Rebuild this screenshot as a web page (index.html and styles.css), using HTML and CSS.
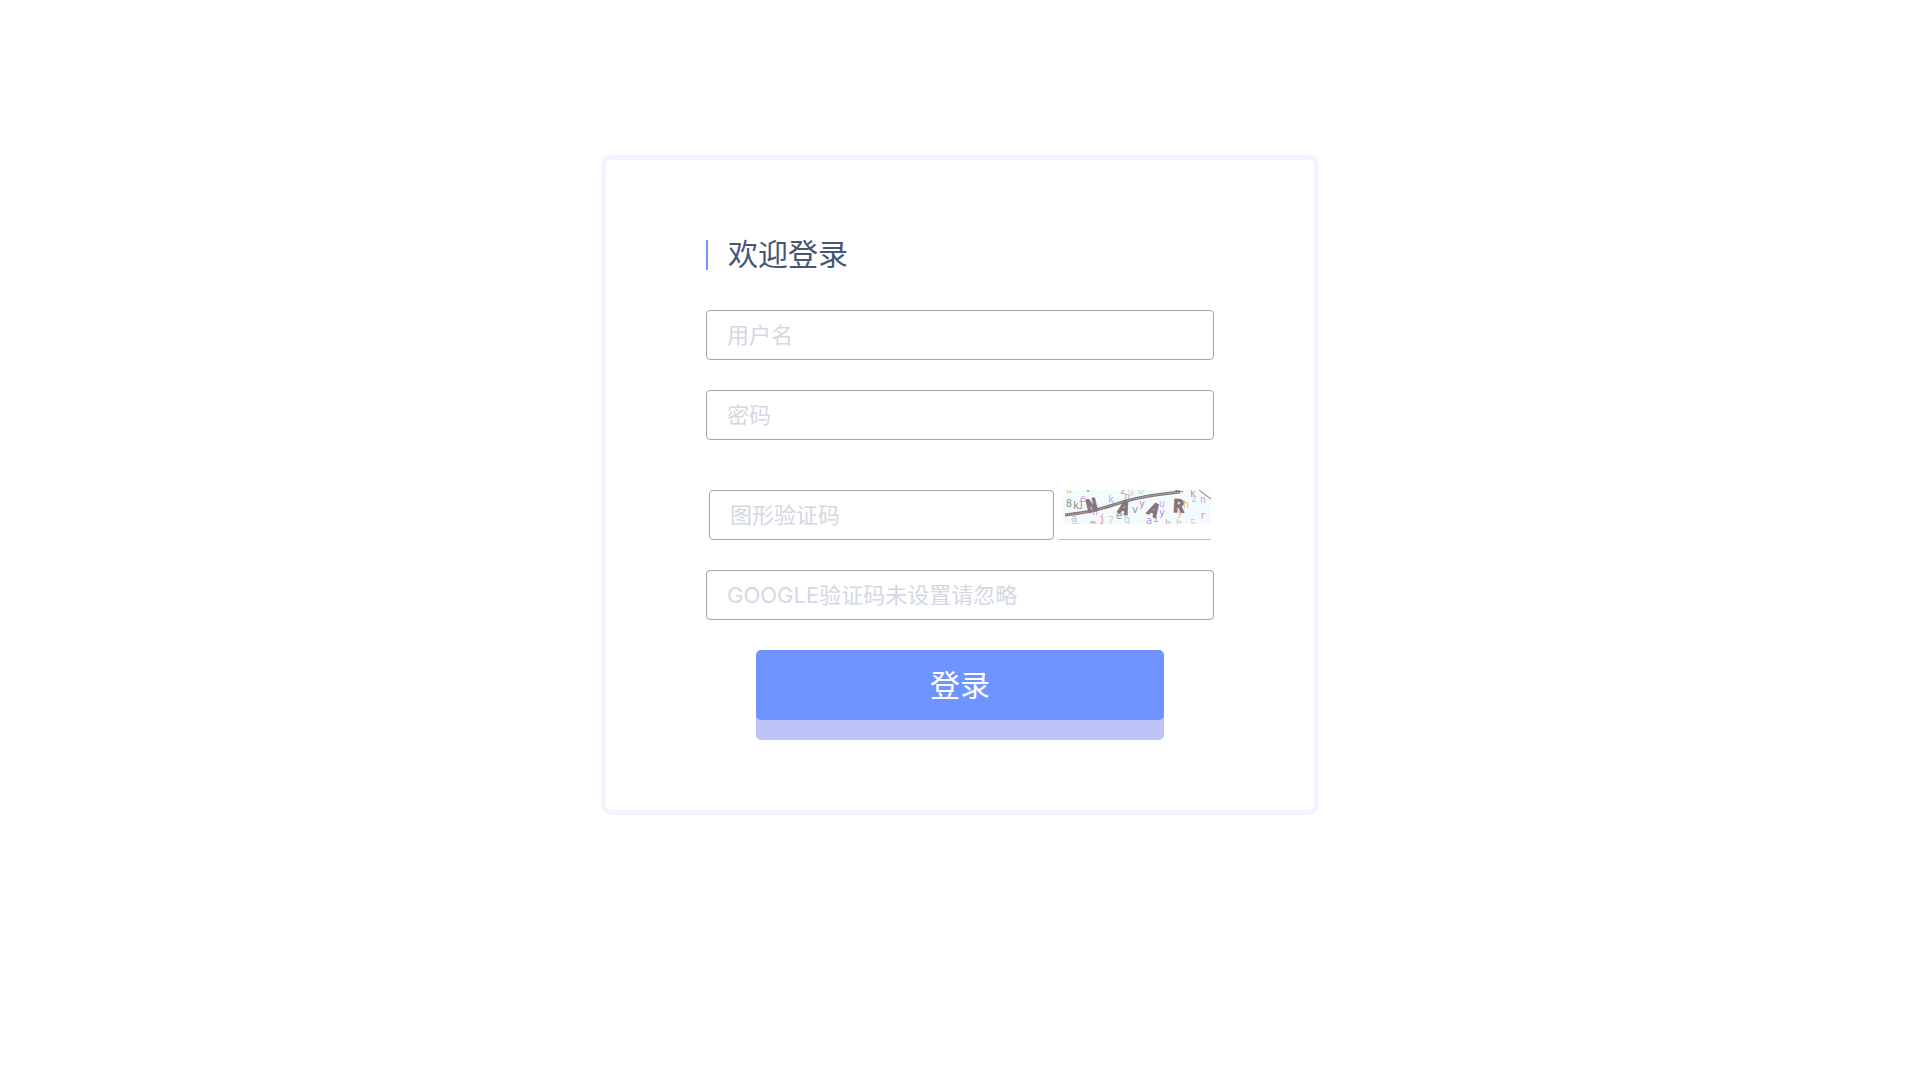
FILE: index.html
```html
<!DOCTYPE html>
<html lang="zh-CN">
<head>
<meta charset="utf-8">
<title>欢迎登录</title>
<link rel="stylesheet" href="styles.css">
</head>
<body>
<main class="panel">
  <h1 class="title">欢迎登录</h1>
  <form class="form">
    <input class="field" type="text" placeholder="用户名" aria-label="用户名">
    <input class="field" type="password" placeholder="密码" aria-label="密码">
    <div class="captcha-row">
      <input class="field" type="text" placeholder="图形验证码" aria-label="图形验证码">
      <div class="captcha">
        <svg class="captcha-image" viewBox="0 0 148 34" role="img" aria-label="图形验证码">
          <rect width="148" height="34" fill="#f3fbfe"/>
          <g class="noise">
            <text x="3" y="3" fill="#d9c48b">u</text>
            <text x="3" y="17" fill="#8b8b91">8</text>
            <text x="10" y="19" fill="#8b8b91">k</text>
            <text x="15" y="17" fill="#8b8b91">j</text>
            <text x="17" y="12" fill="#d9a5dd">e</text>
            <text x="22" y="2" fill="#7daa83">v</text>
            <text x="45" y="13" fill="#b3b5e4">k</text>
            <text x="57" y="4" fill="#d99595">z</text>
            <text x="65" y="4" fill="#c6dcc8">g</text>
            <text x="61" y="10" fill="#d39adb">n</text>
            <text x="75" y="4" fill="#c4d6c7">b</text>
            <text x="76" y="17" fill="#c68bd1">y</text>
            <text x="69" y="23" fill="#8d9692">v</text>
            <text x="96" y="17" fill="#d8a2e0">u</text>
            <text x="96" y="26" fill="#c68bd1">y</text>
            <text x="29" y="25" fill="#d39adb">n</text>
            <text x="8" y="32" fill="#b9bfe6">a</text>
            <text x="9" y="39" fill="#a8c9ae">m</text>
            <text x="27" y="37" fill="#d99b9b">m</text>
            <text x="36" y="32" fill="#d08f8f">j</text>
            <text x="45" y="34" fill="#c6dcc8">7</text>
            <text x="53" y="29" fill="#78a67f">e</text>
            <text x="57" y="25" fill="#d39adb">q</text>
            <text x="61" y="33" fill="#bed5c2">q</text>
            <text x="83" y="34" fill="#a6a3d6">a</text>
            <text x="90" y="32" fill="#c68bd1">i</text>
            <text x="102" y="37" fill="#dfaaa7">h</text>
            <text x="113" y="37" fill="#d9c48b">h</text>
            <text x="127" y="37" fill="#c6dcc8">5</text>
            <text x="137" y="29" fill="#dd9d9d">r</text>
            <text x="127" y="7" fill="#db8e8e">k</text>
            <text x="128" y="12" fill="#bcc6e8">z</text>
            <text x="137" y="13" fill="#d8a2e0">n</text>
            <text x="114" y="26" fill="#d9c48b">y</text>
            <text x="120" y="18" fill="#dcbc6d">h</text>
          </g>
          <path d="M2 25Q26 23 50 15T100 4L117 2" fill="none" stroke="#857478" stroke-width="3"/>
          <path d="M3 25Q26 23 50 15T100 4L116 2" fill="none" stroke="#d8cfd2" stroke-dasharray="1 1"/>
          <path d="M112 0l8 2M136 0l12 9" fill="none" stroke="#857478"/>
          <g class="code">
            <text transform="translate(25 23) rotate(-14)">N</text>
            <text transform="translate(54 22) rotate(17)">A</text>
            <text transform="translate(83 23) rotate(28)">A</text>
            <text transform="translate(110 22) rotate(3)">R</text>
          </g>
        </svg>
      </div>
    </div>
    <input class="field" type="text" placeholder="GOOGLE验证码未设置请忽略" aria-label="GOOGLE验证码">
    <button class="submit" type="button">登录</button>
  </form>
</main>
</body>
</html>
```
FILE: styles.css
```css
* { box-sizing: border-box; }

body {
  margin: 0;
  padding: 155px 20px 40px;
  background: #fff;
  font-family: Inter, "Noto Sans CJK SC", sans-serif;
}

.panel {
  max-width: 718px;
  margin: 0 auto;
  padding: 80px 100px 90px;
  border: 5px solid #f0f4fc;
  border-radius: 10px;
}

.title {
  margin: 0 0 40px;
  padding: 0 0 2px 20px;
  border-left: 2px solid #6e94ff;
  color: #475677;
  font-size: 30px;
  font-weight: 400;
  line-height: 28px;
}

.form {
  display: flex;
  flex-direction: column;
  gap: 30px;
}

.field {
  width: 100%;
  height: 50px;
  padding: 0 20px;
  border: 1px solid #a5a5a5;
  border-radius: 4px;
  background: #fff;
  color: #475677;
  font-family: inherit;
  font-size: 22px;
}

.field::placeholder { color: #d3d8e2; }

.captcha-row {
  display: grid;
  grid-template-columns: 1fr 153px;
  gap: 4px;
  margin-top: 20px;
  padding: 0 3px;
}

.captcha {
  padding-left: 5px;
  border-bottom: 1px solid #c0c1ca;
}

.captcha-image {
  display: block;
  width: 148px;
  height: 34px;
}

.noise {
  font: 10px "DejaVu Sans Mono", monospace;
}

.code {
  fill: #857478;
  stroke: #857478;
  font: bold 18px "DejaVu Sans Mono", monospace;
}

.submit {
  height: 70px;
  margin: 0 50px;
  padding: 0 0 4px;
  border: 0;
  border-radius: 5px;
  background: #6e94ff;
  box-shadow: 0 20px 0 #bec3fa;
  color: #fff;
  font-family: inherit;
  font-size: 30px;
}
```
